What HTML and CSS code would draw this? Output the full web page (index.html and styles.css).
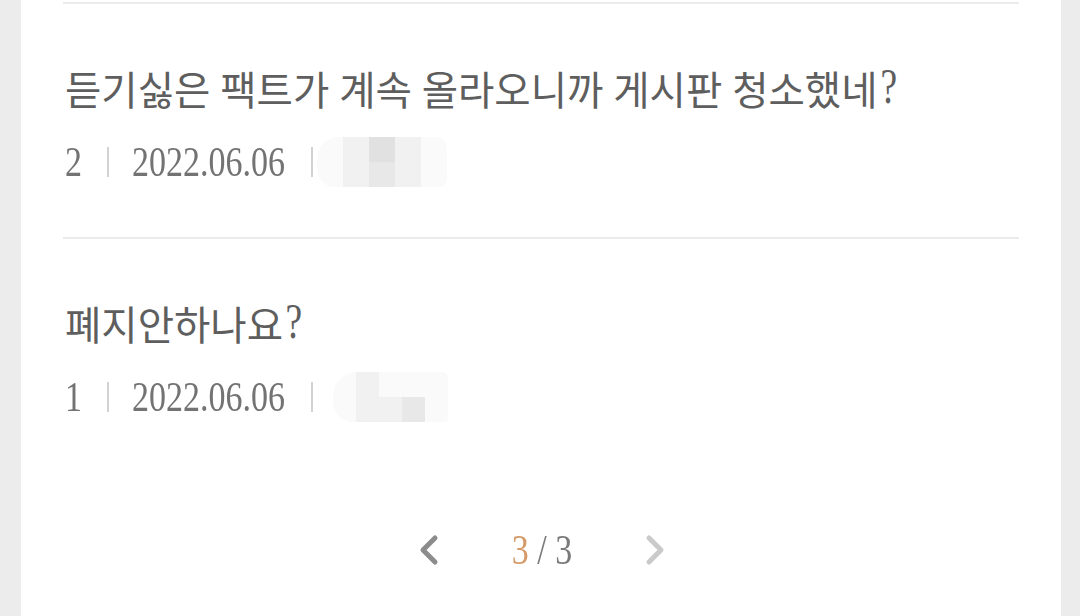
FILE: index.html
```html
<!DOCTYPE html>
<html lang="ko">
<head>
<meta charset="utf-8">
<link rel="stylesheet" href="styles.css">
</head>
<body>
<div class="page">
  <ul class="list">
    <li class="item">
      <div class="title">듣기싫은 팩트가 계속 올라오니까 게시판 청소했네<span class="q">?</span></div>
      <div class="meta">
        <span class="num">2</span>
        <span class="sep"></span>
        <span class="num">2022.06.06</span>
        <span class="sep last"></span>
        <span class="mosaic m1">
          <i class="c1"></i><i class="c2"></i><i class="c3"></i><i class="c2"></i><i class="c1"></i>
          <i class="c1"></i><i class="c2"></i><i class="c4"></i><i class="c2"></i><i class="c1"></i>
        </span>
      </div>
    </li>
    <li class="item">
      <div class="title">폐지안하나요<span class="q">?</span></div>
      <div class="meta">
        <span class="num">1</span>
        <span class="sep"></span>
        <span class="num">2022.06.06</span>
        <span class="sep last"></span>
        <span class="mosaic m2">
          <i class="c1"></i><i class="c2"></i><i class="c1"></i><i class="c1"></i><i class="c1"></i>
          <i class="c1"></i><i class="c2"></i><i class="c2"></i><i class="c4"></i><i class="c1"></i>
        </span>
      </div>
    </li>
  </ul>
  <nav class="pager">
    <span class="arrow prev">
      <svg width="24" height="32" viewBox="0 0 24 32"><path d="M17 4 L5 16 L17 28" fill="none" stroke="#8c8c8c" stroke-width="5" stroke-linecap="round" stroke-linejoin="round"/></svg>
    </span>
    <span class="pages"><span class="current">3</span> / 3</span>
    <span class="arrow next">
      <svg width="24" height="32" viewBox="0 0 24 32"><path d="M7 4 L19 16 L7 28" fill="none" stroke="#cacaca" stroke-width="5" stroke-linecap="round" stroke-linejoin="round"/></svg>
    </span>
  </nav>
</div>
</body>
</html>
```

FILE: styles.css
```css
html, body {
  margin: 0;
  padding: 0;
  background: #ececec;
}
.page {
  margin: 0 19px 0 21px;
  height: 616px;
  background: #ffffff;
  padding: 2px 42px 0;
  box-sizing: border-box;
  font-family: "Liberation Serif", "Noto Sans CJK KR", serif;
  overflow: hidden;
}
.list {
  list-style: none;
  margin: 0;
  padding: 0;
}
.item {
  border-top: 2px solid #ebebeb;
  padding: 64px 0 55px 2px;
}
.title {
  font-size: 39.5px;
  line-height: 48px;
  height: 48px;
  color: #5e5e5e;
  white-space: nowrap;
}
.q {
  display: inline-block;
  margin-left: 2px;
  transform: scale(0.95, 1.3) translateY(-1px);
  transform-origin: 50% 80%;
}
.meta {
  margin-top: 26px;
  height: 40px;
  display: flex;
  align-items: center;
  font-size: 34px;
  line-height: 40px;
  color: #737373;
}
.num {
  display: inline-block;
  transform: scaleY(1.25);
}
.sep {
  display: inline-block;
  width: 2px;
  height: 30px;
  background: #d2d2d2;
  margin: 0 23px 0 25px;
}
.sep.last {
  margin: 0 4px 0 26px;
}
.mosaic {
  display: grid;
  grid-template-columns: repeat(5, 26px);
  grid-template-rows: 25px 25px;
  margin: -5px 0;
  border-radius: 22px 10px 8px 18px;
  overflow: hidden;
  filter: blur(0.6px);
}
.m2 {
  margin-left: 16px;
  grid-template-columns: repeat(5, 23px);
  border-radius: 24px 6px 4px 20px;
}
.mosaic i { display: block; }
.c1 { background: #fafafa; }
.c2 { background: #f1f1f1; }
.c3 { background: #e1e1e1; }
.c4 { background: #e8e8e8; }
.pager {
  margin-top: 58px;
  height: 40px;
  display: flex;
  justify-content: center;
  align-items: center;
  gap: 70px;
  padding-left: 2px;
}
.arrow {
  display: flex;
  align-items: center;
}
.pages {
  display: inline-block;
  font-size: 34px;
  line-height: 40px;
  color: #7a7a7a;
  white-space: pre;
  transform: scaleY(1.25);
}
.current {
  color: #d49a68;
}
```
